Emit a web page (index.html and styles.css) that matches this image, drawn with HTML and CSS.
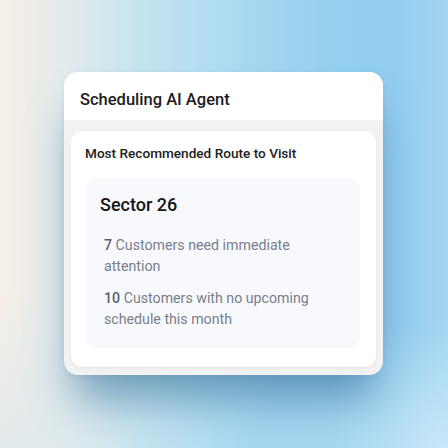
FILE: index.html
```html
<!DOCTYPE html>
<html>
<head>
<meta charset="utf-8">
<link rel="stylesheet" href="styles.css">
</head>
<body>
<div class="stage">
  <div class="card">
    <div class="card-header">Scheduling AI Agent</div>
    <div class="card-body">
      <div class="panel">
        <div class="panel-title">Most Recommended Route to Visit</div>
        <div class="route">
          <div class="route-name">Sector 26</div>
          <ul class="stats">
            <li><span class="num">7</span> Customers need immediate attention</li>
            <li><span class="num">10</span> Customers with no upcoming schedule this month</li>
          </ul>
        </div>
      </div>
    </div>
  </div>
</div>
</body>
</html>
```
FILE: styles.css
```css
html, body {
  margin: 0;
  padding: 0;
}
body {
  width: 448px;
  height: 448px;
  overflow: hidden;
  font-family: Roboto, "Liberation Sans", Arial, sans-serif;
  background:
    radial-gradient(ellipse 60% 40% at 100% 100%, rgba(210,236,250,0.8), rgba(210,236,250,0) 70%),
    radial-gradient(ellipse 40% 50% at 0% 100%, rgba(215,232,240,0.6), rgba(215,232,240,0) 70%),
    linear-gradient(to right, #f6efe6 0%, #e4ebec 14%, #c6e3f0 32%, #aedbf2 50%, #94cfee 75%, #92cdee 88%, #a3d6f1 100%);
}
.stage {
  padding: 72px 0 0 64px;
}
.card {
  width: 319px;
  height: 303px;
  border-radius: 14px;
  background: #f2f2f3;
  overflow: hidden;
  display: flex;
  flex-direction: column;
  box-shadow: 0 34px 44px -10px rgba(50, 110, 150, 0.6), 0 2px 6px rgba(80, 120, 150, 0.12);
}
.card-header {
  background: #ffffff;
  height: 48px;
  flex: none;
  padding: 6px 0 0 16px;
  display: flex;
  align-items: center;
  box-sizing: border-box;
  font-size: 16.5px;
  font-weight: 500;
  color: #1c1c1c;
}
.card-body {
  flex: 1;
  padding: 11px 7px 9px 7px;
  display: flex;
}
.panel {
  flex: 1;
  background: #ffffff;
  border-radius: 11px;
  padding: 14px 16px 19px 15px;
  display: flex;
  flex-direction: column;
  box-shadow: 0 1px 3px rgba(0,0,0,0.06);
}
.panel-title {
  font-size: 13.6px;
  line-height: 16px;
  font-weight: 500;
  color: #222222;
  margin-left: -1px;
}
.route {
  margin-top: 18px;
  flex: 1;
  background: #f7f9fc;
  border-radius: 9px;
  padding: 15px 14px 18px 14px;
}
.route-name {
  font-size: 18px;
  line-height: 22px;
  font-weight: 500;
  color: #151515;
}
.stats {
  list-style: none;
  margin: 19px 0 0 4px;
  padding: 0;
  max-width: 222px;
}
.stats li {
  font-size: 14.2px;
  line-height: 21px;
  color: #7a7e8c;
}
.stats li + li {
  margin-top: 11px;
}
.num {
  font-weight: 500;
  color: #5d6170;
}
```
